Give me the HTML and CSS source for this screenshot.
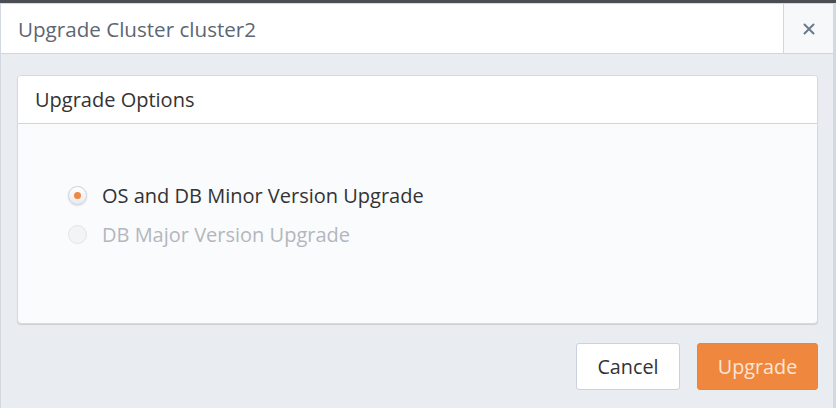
FILE: index.html
```html
<!DOCTYPE html>
<html>
<head>
<meta charset="utf-8">
<link rel="stylesheet" href="styles.css">
</head>
<body>
<div class="topbar"></div>
<div class="dialog">
  <div class="dialog-header">
    <div class="dialog-title">Upgrade Cluster cluster2</div>
    <button class="close-btn" aria-label="Close">
      <svg width="12" height="12" viewBox="0 0 12 12"><path d="M1.5 1.5 L10.5 10.5 M10.5 1.5 L1.5 10.5" stroke="#6b7a90" stroke-width="2" stroke-linecap="round"/></svg>
    </button>
  </div>
  <div class="dialog-body">
    <div class="panel">
      <div class="panel-header">Upgrade Options</div>
      <div class="panel-body">
        <label class="radio-row">
          <span class="radio checked"><span class="dot"></span></span>
          <span class="radio-label">OS and DB Minor Version Upgrade</span>
        </label>
        <label class="radio-row disabled">
          <span class="radio"></span>
          <span class="radio-label">DB Major Version Upgrade</span>
        </label>
      </div>
    </div>
    <div class="actions">
      <button class="btn btn-default">Cancel</button>
      <button class="btn btn-primary">Upgrade</button>
    </div>
  </div>
</div>
</body>
</html>
```
FILE: styles.css
```css
* { box-sizing: border-box; }
html, body { margin: 0; padding: 0; }
body {
  width: 836px;
  height: 408px;
  overflow: hidden;
  background: #e9ecf0;
  font-family: "Open Sans", "Noto Sans", sans-serif;
}
.topbar {
  height: 3px;
  background: #4a4d52;
}
.dialog {
  border-left: 1px solid #d3d9e1;
  border-right: 3px solid #d3d9e1;
  height: 405px;
  display: flex;
  flex-direction: column;
}
.dialog-header {
  display: flex;
  height: 51px;
  background: #fff;
  border-top: 1px solid #d3d9e1;
  border-bottom: 1px solid #cfd6df;
}
.dialog-title {
  flex: 1;
  padding-left: 17px;
  display: flex;
  align-items: center;
  font-size: 20.6px;
  color: #5d6673;
}
.close-btn {
  width: 50px;
  border: none;
  border-left: 1px solid #cfd6df;
  background: #f7f8fa;
  display: flex;
  align-items: center;
  justify-content: center;
  padding: 0;
}
.dialog-body {
  flex: 1;
  padding: 21px 15px 0 16px;
  display: flex;
  flex-direction: column;
}
.panel {
  background: #fafbfc;
  border: 1px solid #d5dae1;
  border-radius: 4px;
  box-shadow: 0 1px 1px rgba(0,0,0,0.12);
  height: 249px;
  display: flex;
  flex-direction: column;
  overflow: hidden;
}
.panel-header {
  height: 48px;
  background: #fff;
  border-bottom: 1px solid #cfd5dd;
  padding-left: 17px;
  display: flex;
  align-items: center;
  font-size: 20px;
  color: #333;
}
.panel-body {
  padding: 56px 0 0 50px;
  display: flex;
  flex-direction: column;
  gap: 9px;
}
.radio-row {
  display: flex;
  align-items: center;
  height: 30px;
}
.radio {
  width: 19px;
  height: 19px;
  border-radius: 50%;
  border: 1px solid #cdd1d8;
  background: linear-gradient(#ffffff, #e8eaee);
  box-shadow: 0 1px 2px rgba(0,0,0,0.12);
  display: flex;
  align-items: center;
  justify-content: center;
  margin-right: 15px;
}
.radio .dot {
  width: 7px;
  height: 7px;
  border-radius: 50%;
  background: #f0873f;
}
.radio-label {
  font-size: 20px;
  color: #333;
}
.disabled .radio {
  background: #f3f4f6;
  border-color: #e1e4e8;
  box-shadow: none;
}
.disabled .radio-label {
  color: #b3b7bd;
}
.actions {
  display: flex;
  justify-content: flex-end;
  gap: 17px;
  margin-top: 19px;
}
.btn {
  height: 47px;
  font-family: inherit;
  font-size: 19.8px;
  border-radius: 3px;
  padding: 0;
}
.btn-default {
  width: 104px;
  background: #fff;
  border: 1px solid #c9d2de;
  color: #333;
}
.btn-primary {
  width: 121px;
  background: #f0873f;
  border: 1px solid #ee8238;
  color: #fbe6d6;
}
```
